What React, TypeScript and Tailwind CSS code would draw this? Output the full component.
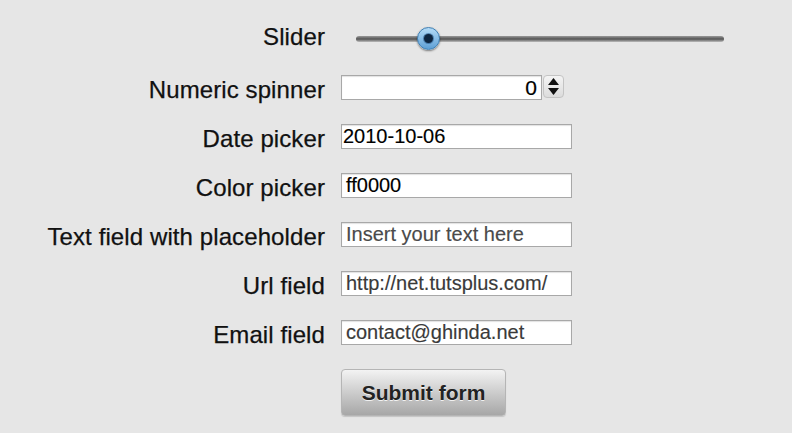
import React from "react";

function Row({ label, children, pt = "pt-[2px]" }: { label: string; children: React.ReactNode; pt?: string }) {
  return (
    <div className="flex items-start gap-[16px] h-[25px]">
      <div className={"w-[325px] shrink-0 text-right text-[24px] tracking-[0.1px] leading-[25px] text-[#111] whitespace-nowrap [-webkit-text-stroke:0.25px_#111] " + pt}>
        {label}
      </div>
      {children}
    </div>
  );
}

const inputCls =
  "h-[25px] w-[231px] bg-white border border-[#a8a8a8] shadow-[inset_0_1px_1px_rgba(0,0,0,0.12)] text-[20px] leading-[23px] outline-none [-webkit-text-stroke:0.15px_currentColor]";

export default function App() {
  return (
    <div
      className="w-[792px] h-[433px] bg-[#e6e6e6] pt-[26px] flex flex-col gap-[24px] overflow-hidden"
      style={{ fontFamily: '"Liberation Sans", Arial, sans-serif' }}
    >
      <Row label="Slider" pt="-mt-[2px]">
        <div className="ml-[15px] w-[368px] h-[25px] relative flex items-center">
          <div className="w-full h-[6px] rounded-full bg-gradient-to-b from-[#9a9a9a] via-[#555] to-[#bdbdbd]" />
          <div className="absolute left-[61px] top-[1px] w-[23px] h-[23px] rounded-full border border-[#3f7fb3] bg-gradient-to-b from-[#b3dbf7] to-[#5d9fd5] shadow-[0_1px_2px_rgba(0,0,0,0.45)] flex items-center justify-center">
            <div className="w-[9px] h-[9px] rounded-full bg-[#0d2540] shadow-[0_0_0_1px_rgba(40,90,140,0.6)]" />
          </div>
        </div>
      </Row>
      <Row label="Numeric spinner">
        <div className="flex items-start gap-[1px]">
          <div className="h-[25px] w-[201px] bg-white border border-[#a8a8a8] shadow-[inset_0_1px_1px_rgba(0,0,0,0.12)] text-[21px] leading-[23px] text-right pr-[4px] text-black [-webkit-text-stroke:0.2px_#000]">
            0
          </div>
          <div className="h-[23px] w-[21px] rounded-[4px] border border-[#c4c4c4] bg-gradient-to-b from-[#f4f4f4] to-[#dcdcdc] flex flex-col items-center justify-center gap-[3px]">
            <svg width="11" height="7" viewBox="0 0 11 7">
              <path d="M5.5 0 L11 7 L0 7 Z" fill="#111" />
            </svg>
            <svg width="11" height="7" viewBox="0 0 11 7">
              <path d="M0 0 L11 0 L5.5 7 Z" fill="#111" />
            </svg>
          </div>
        </div>
      </Row>
      <Row label="Date picker">
        <div className={inputCls + " pl-[1px] text-black"}>2010-10-06</div>
      </Row>
      <Row label="Color picker">
        <div className={inputCls + " pl-[4px] text-black"}>ff0000</div>
      </Row>
      <Row label="Text field with placeholder">
        <div className={inputCls + " pl-[4px] text-[#4a4a4a]"}>Insert your text here</div>
      </Row>
      <Row label="Url field">
        <div className={inputCls + " pl-[4px] text-[#3a3a3a]"}>http://net.tutsplus.com/</div>
      </Row>
      <Row label="Email field">
        <div className={inputCls + " pl-[4px] text-[#3a3a3a] overflow-hidden"}>contact@ghinda.net</div>
      </Row>
      <div className="flex">
        <button className="ml-[341px] w-[165px] h-[47px] rounded-[4px] border border-[#b5b5b5] bg-gradient-to-b from-[#f3f3f3] to-[#a7a7a7] text-[21px] font-bold text-[#222] [text-shadow:0_1px_0_rgba(255,255,255,0.8)] shadow-[0_1px_1px_rgba(0,0,0,0.15)]">
          Submit form
        </button>
      </div>
    </div>
  );
}
